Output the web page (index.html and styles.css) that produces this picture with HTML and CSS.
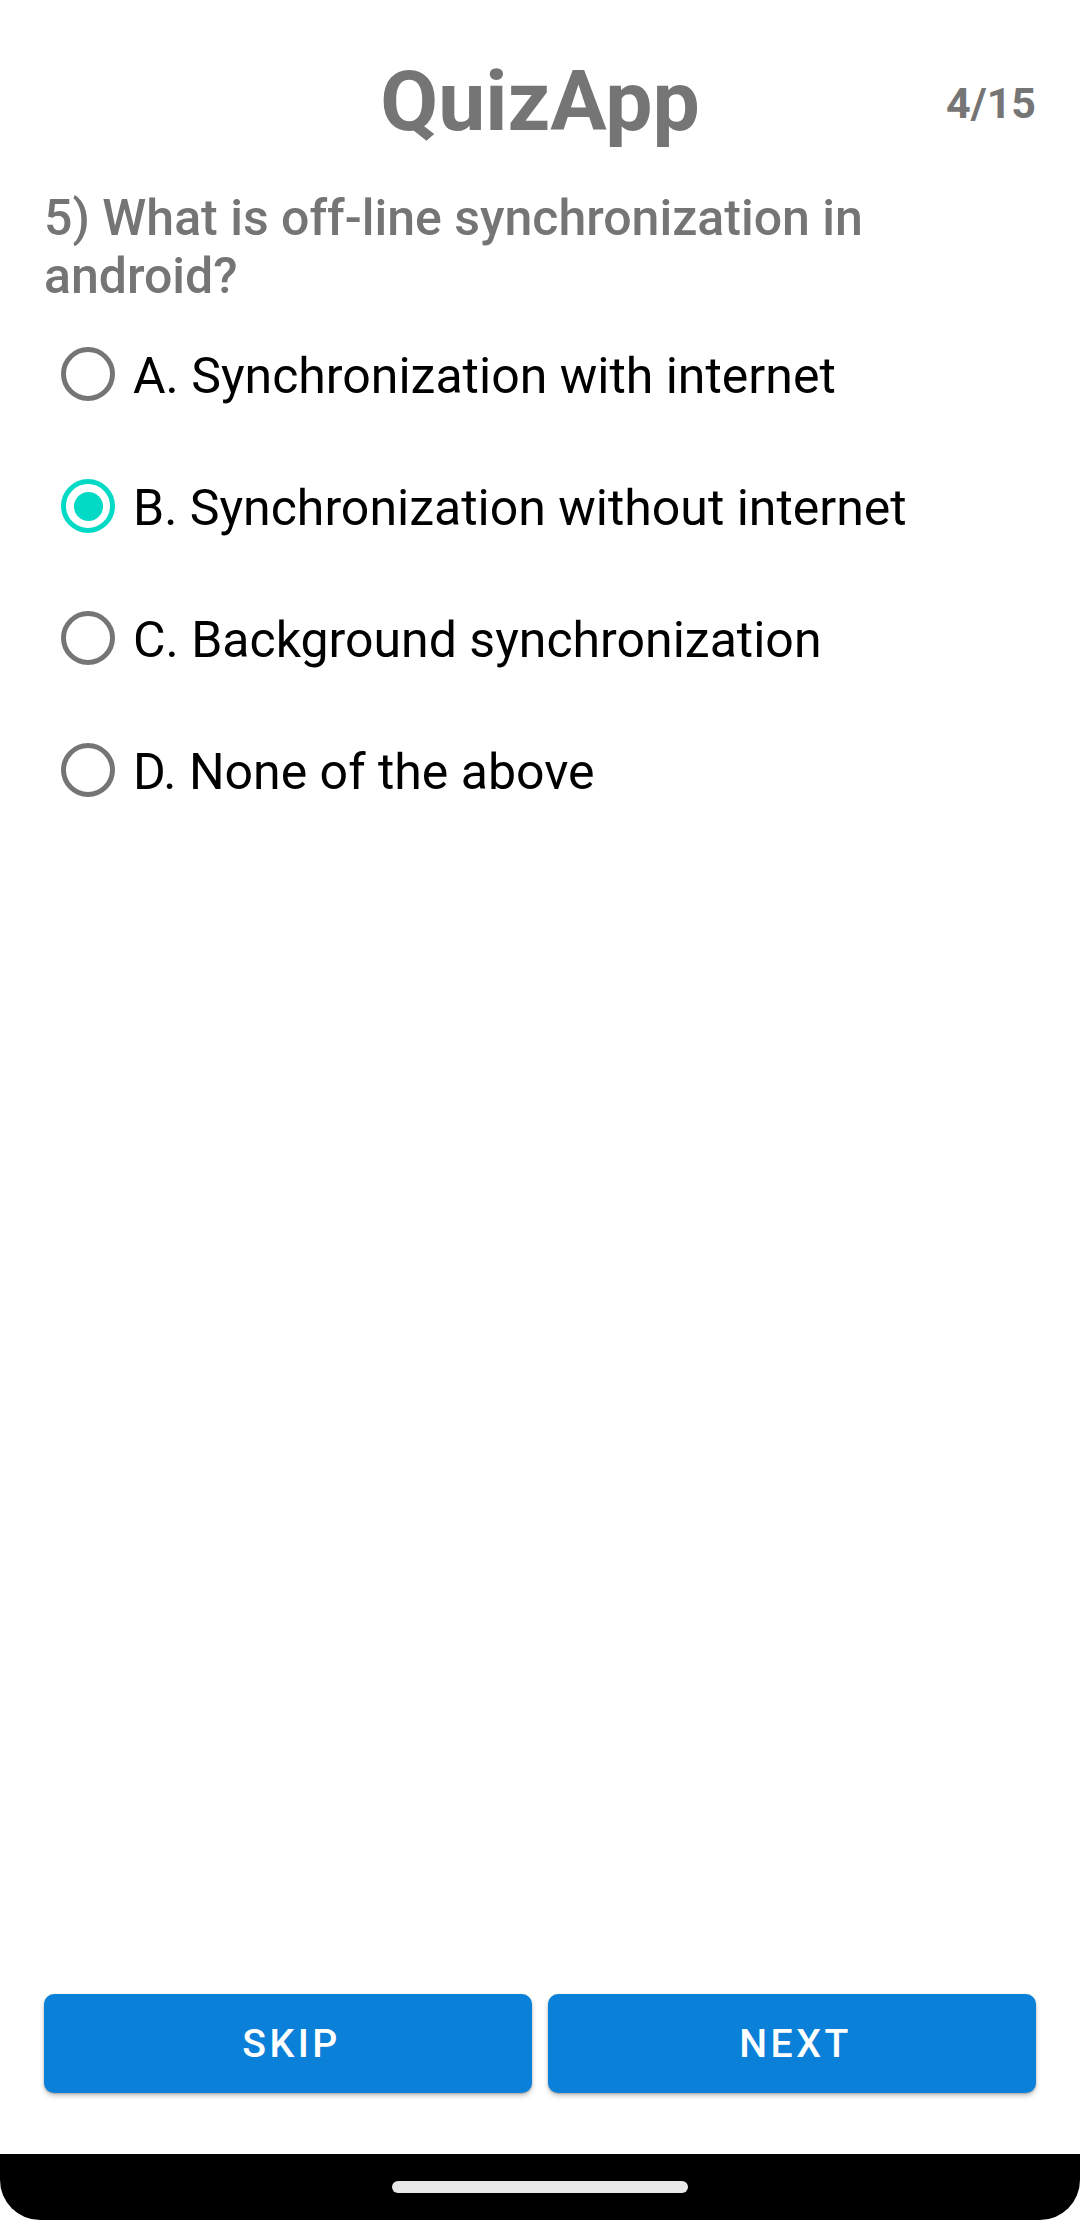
FILE: index.html
```html
<!DOCTYPE html>
<html lang="en">
<head>
<meta charset="utf-8">
<title>QuizApp</title>
<link rel="stylesheet" href="styles.css">
</head>
<body>
<div class="screen">
  <main class="content">
    <header class="header">
      <div class="header-side"></div>
      <h1 class="title">QuizApp</h1>
      <div class="counter">4/15</div>
    </header>
    <p class="question">5) What is off-line synchronization in android?</p>
    <div class="options">
      <div class="option"><span class="radio"></span><span class="label">A. Synchronization with internet</span></div>
      <div class="option"><span class="radio checked"></span><span class="label">B. Synchronization without internet</span></div>
      <div class="option"><span class="radio"></span><span class="label">C. Background synchronization</span></div>
      <div class="option"><span class="radio"></span><span class="label">D. None of the above</span></div>
    </div>
    <div class="spacer"></div>
    <div class="buttons">
      <button class="btn">SKIP</button>
      <button class="btn">NEXT</button>
    </div>
  </main>
  <nav class="navbar"><span class="pill"></span></nav>
</div>
</body>
</html>
```
FILE: styles.css
```css
html, body {
  margin: 0;
  padding: 0;
  background: #ffffff;
}
body {
  font-family: Roboto, "Noto Sans", "Liberation Sans", sans-serif;
}
.screen {
  width: 1080px;
  height: 2220px;
  display: flex;
  flex-direction: column;
  overflow: hidden;
}
.content {
  flex: 1;
  display: flex;
  flex-direction: column;
  padding: 0 44px;
}
.header {
  display: grid;
  grid-template-columns: 1fr auto 1fr;
  align-items: start;
  padding-top: 53px;
}
.title {
  margin: 0;
  font-size: 84px;
  font-weight: 700;
  line-height: 98px;
  color: #757575;
}
.counter {
  justify-self: end;
  margin-top: 25px;
  font-size: 43px;
  font-weight: 700;
  line-height: 50px;
  color: #757575;
}
.question {
  margin: 38px 0 0 0;
  font-size: 50px;
  font-weight: 500;
  line-height: 58px;
  color: #757575;
}
.options {
  margin-top: 3px;
  display: flex;
  flex-direction: column;
}
.option {
  height: 132px;
  display: flex;
  align-items: center;
}
.radio {
  box-sizing: border-box;
  width: 54px;
  height: 54px;
  margin-left: 17px;
  border: 5px solid #757575;
  border-radius: 50%;
  display: flex;
  align-items: center;
  justify-content: center;
  flex-shrink: 0;
}
.radio.checked {
  border-color: #03dac5;
}
.radio.checked::after {
  content: "";
  width: 29px;
  height: 29px;
  border-radius: 50%;
  background: #03dac5;
}
.label {
  margin-left: 18px;
  padding-top: 4px;
  font-size: 50px;
  font-weight: 400;
  color: #000000;
}
.spacer {
  flex: 1;
}
.buttons {
  display: flex;
  gap: 16px;
  margin-bottom: 61px;
}
.btn {
  flex: 1;
  height: 99px;
  border: none;
  border-radius: 10px;
  background: #0a80d8;
  color: #ffffff;
  font-family: Roboto, "Noto Sans", "Liberation Sans", sans-serif;
  font-size: 39.2px;
  font-weight: 500;
  letter-spacing: 0.09em;
  box-shadow: 0 3px 5px rgba(0, 0, 0, 0.22), 0 1px 2px rgba(0, 0, 0, 0.18);
  padding: 0 0 0 0.18em;
}
.navbar {
  height: 66px;
  background: #000000;
  border-radius: 0 0 40px 40px;
  display: flex;
  justify-content: center;
  align-items: flex-start;
}
.pill {
  margin-top: 27px;
  width: 296px;
  height: 12px;
  border-radius: 6px;
  background: #e8e8e8;
}
```
